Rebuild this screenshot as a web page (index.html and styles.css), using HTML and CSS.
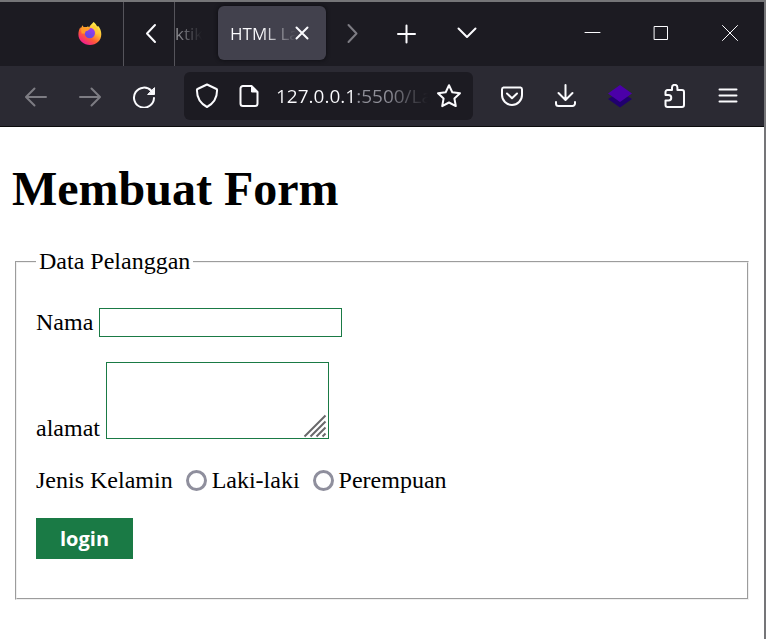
FILE: index.html
```html
<!DOCTYPE html>
<html lang="id">
<head>
<meta charset="utf-8">
<title>HTML Lanjutan</title>
<link rel="stylesheet" href="styles.css">
</head>
<body>
<div class="window">
  <header class="chrome">
    <div class="tabs">
      <button class="view" type="button" aria-label="Firefox View">
        <svg width="24" height="24" viewBox="0 0 24 24">
          <defs>
            <linearGradient id="flame" x1="0.85" y1="0.1" x2="0.25" y2="1">
              <stop offset="0" stop-color="#fff44f"/>
              <stop offset="0.35" stop-color="#ffb932"/>
              <stop offset="0.65" stop-color="#ff5a36"/>
              <stop offset="1" stop-color="#f0149a"/>
            </linearGradient>
            <linearGradient id="globe" x1="0.8" y1="0" x2="0.3" y2="1">
              <stop offset="0" stop-color="#a238ef"/>
              <stop offset="1" stop-color="#5b4be0"/>
            </linearGradient>
          </defs>
          <path fill="url(#flame)" d="M15.600 0c1 1.100 2.700 2.300 3.500 4.400l1.100-.3c2 2.200 3.100 5 3.100 8.200C23.300 18.800 18.200 23 12 23S.4 18.700.4 12.500c0-2.800.8-5.200 2-7.200l.5 1.200L4.400 3.200l1.500 2.200c1.200-.5 2.300-.5 3.500-.3l.4-1.200 1.300 1.500c.9-1.800 2.500-3.500 4.500-5.400z"/>
          <circle cx="11.800" cy="11" r="5.200" fill="url(#globe)"/>
          <path fill="#ff9a28" d="M3 6c2-1.500 5-1 6.500-.2 1.200-.5 2.500.1 3 1-1.500.2-1.500 1.700-3 2-1.600.2-2.500 1.200-2.500 2.600L3.600 11.500z"/>
          <path fill="#ffcb35" d="M14 5.800c3.400.7 5 3.300 4.200 6.400l2-1.200-.8-5-3.400-3z"/>
        </svg>
      </button>
      <button class="scroll" type="button" aria-label="Scroll left">
        <svg width="24" height="24" viewBox="0 0 24 24"><path d="M18 3 10 11.500l8 8.500"/></svg>
      </button>
      <span class="cut-tab">ktik</span>
      <div class="tab">
        <span class="tab-title">HTML La</span>
        <button class="tab-close" type="button" aria-label="Close tab">
          <svg width="14" height="14" viewBox="0 0 14 14"><path d="M1.500 1.500l11 11M12.500 1.500l-11 11"/></svg>
        </button>
      </div>
      <button class="cell dim" type="button" aria-label="Scroll right">
        <svg width="24" height="24" viewBox="0 0 24 24"><path d="M7.500 3l8 8.500-8 8.500"/></svg>
      </button>
      <button class="cell" type="button" aria-label="New tab">
        <svg width="24" height="24" viewBox="0 0 24 24"><path d="M11.500 3.500v17M3 12h17"/></svg>
      </button>
      <button class="cell wide" type="button" aria-label="List all tabs">
        <svg width="24" height="24" viewBox="0 0 24 24"><path d="M2.500 6.500l8.500 8.500 8.500-8.500"/></svg>
      </button>
      <div class="controls">
        <button class="control" type="button" aria-label="Minimize">
          <svg width="18" height="18" viewBox="0 0 18 18"><path d="M2 7.500h15"/></svg>
        </button>
        <button class="control" type="button" aria-label="Maximize">
          <svg width="18" height="18" viewBox="0 0 18 18"><path d="M2.500 1.500h13v13h-13z"/></svg>
        </button>
        <button class="control" type="button" aria-label="Close">
          <svg width="18" height="18" viewBox="0 0 18 18"><path d="M1.500 .500l15 15M16.500 .500l-15 15"/></svg>
        </button>
      </div>
    </div>
    <div class="toolbar">
      <button class="cell dim" type="button" aria-label="Back">
        <svg width="24" height="24" viewBox="0 0 24 24"><path d="M22 13H2.500M10.500 4.500L2 13l8.500 8.500"/></svg>
      </button>
      <button class="cell dim" type="button" aria-label="Forward">
        <svg width="24" height="24" viewBox="0 0 24 24"><path d="M2 13h19.500M13.500 4.500L22 13l-8.500 8.500"/></svg>
      </button>
      <button class="cell" type="button" aria-label="Reload">
        <svg width="24" height="24" viewBox="0 0 24 24"><path d="M19.500 7A10 10 0 1 0 22 14"/><path class="solid" d="M22.500 4v6.500H16z"/></svg>
      </button>
      <div class="urlbar">
        <svg width="24" height="26" viewBox="0 0 24 26"><path d="M12 1.500l9.500 4.500c.5 0 .6.500.6 1 0 7-2.600 13-10.100 17C4.500 20 1.900 14 1.900 7c0-.5.1-1 .6-1z"/></svg>
        <svg class="page-icon" width="20" height="24" viewBox="0 0 20 24"><path d="M4 2h8.500l6 6v11.500a2.500 2.500 0 0 1-2.500 2.500H4A2.500 2.500 0 0 1 1.500 19.500v-15A2.500 2.500 0 0 1 4 2z"/><path class="solid" d="M12.500 2v6h6z"/></svg>
        <input class="address" type="text" value="127.0.0.1:5500/La" aria-label="Address">
        <button class="star" type="button" aria-label="Bookmark">
          <svg width="26" height="26" viewBox="0 0 26 26"><path d="M13 2.200l3.300 7 7.700 1-5.600 5.300 1.400 7.600L13 19.500l-6.800 3.600 1.400-7.600L2 10.200l7.700-1z"/></svg>
        </button>
      </div>
      <button class="cell" type="button" aria-label="Pocket">
        <svg width="24" height="24" viewBox="0 0 24 24"><path d="M3.500 3.500h17a2 2 0 0 1 1.500 2v5.500a10 10 0 0 1-20 0V5.500a2 2 0 0 1 1.500-2zM7 9.500l5 4.800 5-4.800"/></svg>
      </button>
      <button class="cell" type="button" aria-label="Downloads">
        <svg width="24" height="24" viewBox="0 0 24 24"><path d="M11.500 1v14.500M4.500 9l7 7 7-7M2 18v1.500a2.500 2.500 0 0 0 2.500 2.500h14a2.500 2.500 0 0 0 2.500-2.500V18"/></svg>
      </button>
      <button class="cell" type="button" aria-label="Extension">
        <svg width="26" height="24" viewBox="0 0 26 24"><path class="layer-low" d="M1 15l12-7 12 7-12 8.500z"/><path class="layer-top" d="M1 9.500L13 1l12 8.500L13 18z"/></svg>
      </button>
      <button class="cell" type="button" aria-label="Extensions">
        <svg width="24" height="24" viewBox="0 0 24 24"><path d="M5.500 6H10V3.500a2.700 2.700 0 0 1 5.400 0V6H20a2 2 0 0 1 2 2v13a2 2 0 0 1-2 2H5.500a2 2 0 0 1-2-2v-4.500h3a2.700 2.700 0 0 0 0-5.500h-3V8a2 2 0 0 1 2-2z"/></svg>
      </button>
      <button class="cell" type="button" aria-label="Menu">
        <svg width="20" height="24" viewBox="0 0 20 24"><path d="M1.500 5.500h17M1.500 11.500h17M1.500 17.500h17"/></svg>
      </button>
    </div>
  </header>
  <main class="page">
    <h1>Membuat Form</h1>
    <form>
      <fieldset>
        <legend>Data Pelanggan</legend>
        <div class="row row-name">
          <label for="nama">Nama</label>
          <input class="field" type="text" id="nama">
        </div>
        <div class="row row-address">
          <label for="alamat">alamat</label>
          <div class="area">
            <textarea class="field" id="alamat"></textarea>
            <svg class="grip" width="24" height="24" viewBox="0 0 24 24"><path d="M1.500 22.500l21-21M7.500 22.500l15-15M13.500 22.500l9-9M19.500 22.500l3-3"/></svg>
          </div>
        </div>
        <div class="row row-gender">
          <span>Jenis Kelamin</span>
          <label class="choice"><input type="radio" name="jk">Laki-laki</label>
          <label class="choice"><input type="radio" name="jk">Perempuan</label>
        </div>
        <button class="login" type="button">login</button>
      </fieldset>
    </form>
  </main>
</div>
</body>
</html>
```
FILE: styles.css
```css
* {
  box-sizing: border-box;
}

body {
  margin: 0;
  background: #fff;
  color: #000;
  font-family: "Liberation Serif", serif;
  font-size: 24px;
  line-height: 27px;
}

.window {
  min-height: 100vh;
  border-top: 2px solid #757578;
  border-right: 2px solid #757578;
}

.chrome {
  border-bottom: 1px solid #0c0c0d;
  background: #2b2a33;
  font-family: "Open Sans", "Noto Sans", sans-serif;
  color: #fbfbfe;
}

.chrome button {
  display: flex;
  align-items: center;
  justify-content: center;
  flex: none;
  margin: 0;
  padding: 0;
  border: 0;
  background: none;
  color: #fbfbfe;
}

svg {
  display: block;
  flex: none;
}

.chrome path {
  stroke-width: 2;
}

.toolbar path,
.tabs button:not(.view) path {
  fill: none;
  stroke: currentColor;
  stroke-linecap: round;
  stroke-linejoin: round;
}

.toolbar path.solid {
  fill: currentColor;
  stroke-width: 1;
}

.toolbar path.layer-low {
  fill: #20006e;
  stroke: none;
}

.toolbar path.layer-top {
  fill: #4b00a8;
  stroke: none;
}

.tabs {
  display: flex;
  height: 64px;
  background: #1c1b22;
  font-size: 17px;
}

.chrome .view {
  width: 124px;
  padding-right: 21px;
  border-right: 1px solid #55545b;
  justify-content: flex-end;
}

.chrome .scroll {
  width: 51px;
  border-right: 1px solid #55545b;
}

.cut-tab {
  width: 43px;
  line-height: 64px;
  background: linear-gradient(90deg, #9b9ba0, #1c1b22 27px);
  background-clip: text;
  color: transparent;
}

.tab {
  display: flex;
  align-items: center;
  justify-content: space-between;
  width: 108px;
  margin: 4px 0 6px;
  padding: 0 17px 0 12px;
  border-radius: 6px;
  background: #42414d;
  box-shadow: 0 0 4px #0c0c10;
}

.tab-title {
  flex: none;
  margin-right: -8px;
  white-space: nowrap;
  background: linear-gradient(90deg, #fbfbfe 32px, #42414d 66px);
  background-clip: text;
  color: transparent;
}

.cell {
  width: 54px;
  height: 100%;
}

.wide {
  width: 67px;
}

.chrome .dim {
  color: #7d7c83;
}

.controls {
  display: flex;
  margin-left: auto;
}

.control {
  width: 69px;
}

.chrome .control path {
  stroke-width: 1;
  stroke-linecap: butt;
  stroke-linejoin: miter;
}

.toolbar {
  display: flex;
  align-items: center;
  height: 60px;
  padding: 0 9px;
}

.urlbar {
  display: flex;
  align-items: center;
  flex: 1;
  min-width: 0;
  height: 48px;
  margin: 0 12px 0 13px;
  padding: 0 11px;
  border-radius: 6px;
  background: #1c1b22;
}

.page-icon {
  margin: 0 17px 0 20px;
}

.address {
  flex: 1;
  min-width: 0;
  padding: 0;
  border: 0;
  outline: 0;
  font: inherit;
  font-size: 19px;
  background: linear-gradient(90deg, #fbfbfe 80px, #8f8f98 80px, #8f8f98 112px, #1c1b22 152px);
  background-clip: text;
  color: transparent;
}

.page {
  padding: 34px 12px 24px;
}

h1 {
  margin: 0 0 32px;
  font-size: 48px;
  line-height: 55px;
}

fieldset {
  min-width: 0;
  margin: 0 3px;
  padding: 33px 19px 39px;
  border: 2px groove #f0f0f0;
}

legend {
  padding: 0 3px;
}

.row {
  display: flex;
  gap: 6px;
  margin-bottom: 24px;
}

.row-name {
  min-height: 30px;
  align-items: flex-start;
}

.row-address {
  min-height: 80px;
  align-items: flex-end;
}

.row-gender {
  min-height: 28px;
  align-items: center;
  gap: 13px;
}

.row-name label {
  line-height: 29px;
}

.field {
  display: block;
  appearance: none;
  margin: 0;
  border: 1px solid #1a7a45;
  border-radius: 0;
  outline: 0;
  background: #fff;
  font-family: "Open Sans", sans-serif;
  font-size: 20px;
}

input.field {
  width: 243px;
  height: 29px;
}

.area {
  position: relative;
  align-self: flex-start;
}

textarea.field {
  width: 223px;
  height: 77px;
  resize: none;
}

.grip {
  position: absolute;
  right: 2px;
  bottom: 1px;
  pointer-events: none;
}

.grip path {
  fill: none;
  stroke: #69696b;
  stroke-width: 2;
}

.choice {
  display: flex;
  align-items: center;
  gap: 5px;
}

.choice input {
  appearance: none;
  width: 21px;
  height: 21px;
  margin: 0;
  border: 3px solid #8f8f9d;
  border-radius: 50%;
  background: #fff;
}

.login {
  display: block;
  height: 41px;
  padding: 0 24px;
  border: 0;
  background: #1a7a45;
  color: #fff;
  font-family: "Open Sans", sans-serif;
  font-size: 20px;
  font-weight: 700;
}
```
